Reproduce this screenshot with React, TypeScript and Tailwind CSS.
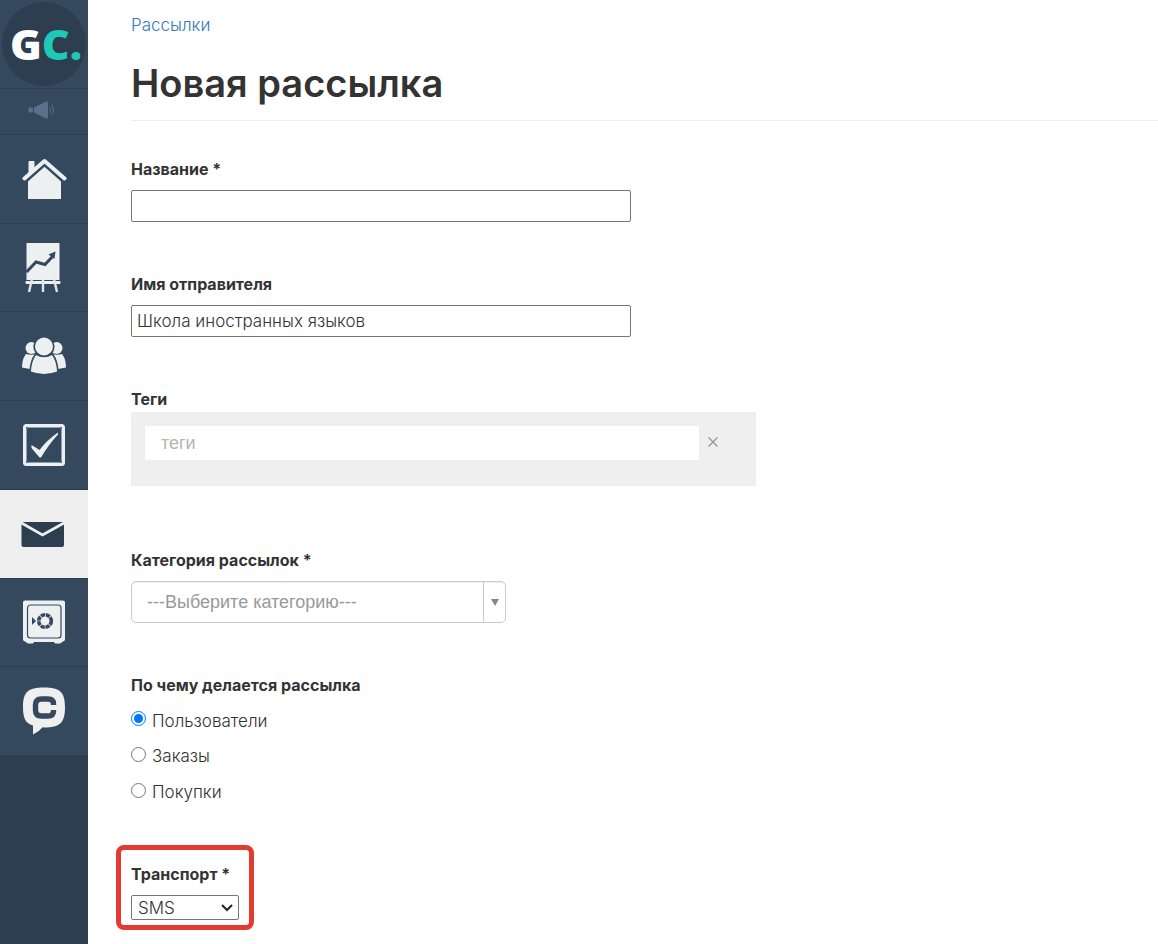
import { useState } from 'react'
import type { ReactNode } from 'react'
import clsx from 'clsx'

function MegaphoneIcon() {
  return (
    <svg viewBox="0 0 28 20" className="h-5 w-7" fill="#587089">
      <rect x="0.500" y="7.500" width="4.500" height="5" rx="1" />
      <path d="M6 7.500 L18 1.500 Q20 1 20 3 V17 Q20 19 18 18.500 L6 12.500 Z" />
      <path d="M21.500 7 Q23.500 10 21.500 13 M23.500 4.500 Q27.500 10 23.500 15.500" fill="none" stroke="#4d6680" strokeWidth="1.300" />
    </svg>
  )
}

function HomeIcon() {
  return (
    <svg viewBox="-1 0 46 42" className="h-[42px] w-[46px]">
      <path d="M6.500 15 V4 Q6.500 3 7.500 3 H11.500 Q12.500 3 12.500 4 V10 Z" fill="#ecf0f1" />
      <path d="M6 21 L22.500 6.500 L39 21 V41 H6 Z" fill="#ecf0f1" />
      <path d="M2.500 23 L22.500 5.200 L42.500 23" fill="none" stroke="#34495e" strokeWidth="5.200" />
      <path d="M2.500 20.500 L22.500 3 L42.500 20.500" fill="none" stroke="#ecf0f1" strokeWidth="4" strokeLinecap="round" strokeLinejoin="round" />
    </svg>
  )
}

function ChartIcon() {
  return (
    <svg viewBox="1 0 36 50" className="h-[50px] w-9 overflow-visible">
      <rect x="1.500" y="0" width="33" height="37" fill="#ecf0f1" />
      <path d="M1.500 29 L11 19 L20 21.500 L28 13" fill="none" stroke="#34495e" strokeWidth="3" />
      <path d="M23.500 11.500 L30.500 8.500 L29.500 16 Z" fill="#34495e" />
      <rect x="0.500" y="38" width="35" height="3" rx="1" fill="#ecf0f1" />
      <path d="M7 36 L4 49 M18 36 V49 M29 36 L32 49" stroke="#dfe5e8" strokeWidth="2.400" />
    </svg>
  )
}

function UsersIcon() {
  return (
    <svg viewBox="0 0 44 38" className="h-[38px] w-11" fill="#ecf0f1">
      <circle cx="9.500" cy="11" r="6" />
      <circle cx="34.500" cy="11" r="6" />
      <path d="M4 17 Q7 18 13 17.500 Q9 22 8 32 L0 30.500 Q0 22 4 17 Z" />
      <path d="M40 17 Q37 18 31 17.500 Q35 22 36 32 L44 30.500 Q44 22 40 17 Z" />
      <path d="M14 17 Q22 22 30 17 Q35 22 36 35 Q22 40.500 8 35 Q9 22 14 17 Z" stroke="#34495e" strokeWidth="1.600" />
      <circle cx="22" cy="9.500" r="9.800" stroke="#34495e" strokeWidth="1.600" />
    </svg>
  )
}

function TaskIcon() {
  return (
    <svg viewBox="0 0 42 42" className="h-[42px] w-[42px]">
      <rect x="1.500" y="1.500" width="39" height="39" rx="2" fill="none" stroke="#ecf0f1" strokeWidth="3" />
      <rect x="3.500" y="3.500" width="35" height="35" rx="2" fill="none" stroke="#8e9db0" strokeWidth="1" />
      <path d="M8.500 21 L16.500 26 Q24 16 35 8.500 V10.500 Q26 20 18 33.500 H16.500 L8.500 24 Z" fill="#ecf0f1" />
    </svg>
  )
}

function MailIcon() {
  return (
    <svg viewBox="1 0 44 28" className="h-7 w-11 overflow-visible">
      <rect x="0.500" y="2" width="42.500" height="25" rx="2" fill="#2c3e50" />
      <path d="M0.500 3 L21.500 15 L43 3" fill="none" stroke="#efefef" strokeWidth="2.600" />
    </svg>
  )
}

function SafeIcon() {
  return (
    <svg viewBox="0 0 42 44" className="h-11 w-[42px]">
      <path d="M2 0.500 H40 Q42 0.500 42 2.500 V39 Q42 41 40 41.500 L37 43.500 H32 L31 42 H11 L10 43.500 H5 L2 41.500 Q0 41 0 39 V2.500 Q0 0.500 2 0.500 Z" fill="#ecf0f1" />
      <rect x="4.500" y="5" width="33.500" height="33" rx="3" fill="none" stroke="#34495e" strokeWidth="1.200" />
      <path d="M9 17 L13 21 L9 25 Z" fill="#34495e" />
      <circle cx="22" cy="21" r="6.300" fill="none" stroke="#34495e" strokeWidth="3.600" strokeDasharray="4.200 0.748" />
    </svg>
  )
}

function ChatIcon() {
  return (
    <svg viewBox="0 0 42 48" className="h-12 w-[42px]">
      <path d="M21 0.500 C37 0.500 42 5 42 20 C42 36 37 40.500 21 40.500 L19.500 40.300 Q16 45 10 47.500 V38.500 C2.500 36.500 0 31 0 20 C0 5 5 0.500 21 0.500 Z" fill="#efefef" />
      <path d="M30.500 18 V17 Q30.500 12 25 12 H18.500 Q12.500 12 12.500 18 V23 Q12.500 29 18.500 29 H25 Q30.500 29 30.500 24 V23" fill="none" stroke="#34495e" strokeWidth="5.400" />
    </svg>
  )
}

const navItems = [
  { label: 'Главная', icon: <HomeIcon /> },
  { label: 'Статистика', icon: <ChartIcon /> },
  { label: 'Пользователи', icon: <UsersIcon /> },
  { label: 'Задачи', icon: <TaskIcon /> },
  { label: 'Сообщения', icon: <MailIcon />, active: true },
  { label: 'Продажи', icon: <SafeIcon /> },
  { label: 'Чат', icon: <ChatIcon /> },
]

function Sidebar() {
  return (
    <aside className="w-[88px] shrink-0 bg-[#2c3e50]">
      <a href="#" className="flex h-[89px] items-center justify-center border-b border-[#2c3e50] bg-[#34495e]">
        <span className="flex h-[84px] w-[84px] items-center justify-center rounded-full bg-[#2c3e50] pl-1 font-['Open_Sans',sans-serif] text-[43px] font-extrabold text-white">
          G<span className="text-[#1fc8b7]">C.</span>
        </span>
      </a>
      <a href="#" aria-label="Новости" className="flex h-[46px] items-center justify-center border-b border-[#2c3e50] bg-[#34495e] pr-1 pb-1">
        <MegaphoneIcon />
      </a>
      <nav className="grid h-[621px] grid-rows-7">
        {navItems.map((item) => (
          <a
            key={item.label}
            href="#"
            aria-label={item.label}
            className={clsx(
              'flex items-center justify-center border-b border-[#2c3e50]',
              item.active ? 'bg-[#efefef]' : 'bg-[#34495e]',
            )}
          >
            {item.icon}
          </a>
        ))}
      </nav>
    </aside>
  )
}

function Label({ htmlFor, children }: { htmlFor: string; children: ReactNode }) {
  return (
    <label htmlFor={htmlFor} className="block text-[16px] leading-6 font-bold">
      {children}
    </label>
  )
}

const sources = ['Пользователи', 'Заказы', 'Покупки']

export default function App() {
  const [sender, setSender] = useState('Школа иностранных языков')
  const [source, setSource] = useState('Пользователи')

  return (
    <div className="flex min-h-screen bg-white font-['Inter',sans-serif] text-[17px] leading-6 font-light text-[#333]">
      <Sidebar />

      <main className="min-w-0 flex-1 pt-[13px] pl-[43px]">
        <a href="#" className="text-[#337ab7]">
          Рассылки
        </a>
        <h1 className="mt-6 border-b border-[#eee] pb-[14px] text-[38px] leading-[45px] font-semibold">Новая рассылка</h1>

        <form className="flex flex-col items-start gap-[50px] pt-9">
          <div className="flex w-full max-w-[500px] flex-col gap-[9px]">
            <Label htmlFor="title">Название *</Label>
            <input id="title" type="text" className="h-8 w-full rounded-xs border border-[#767676] px-[5px]" />
          </div>

          <div className="flex w-full max-w-[500px] flex-col gap-[9px]">
            <Label htmlFor="sender">Имя отправителя</Label>
            <input
              id="sender"
              type="text"
              value={sender}
              onChange={(e) => setSender(e.target.value)}
              className="h-8 w-full rounded-xs border border-[#767676] px-[5px]"
            />
          </div>

          <div className="mb-3 flex w-full max-w-[625px] flex-col gap-px">
            <Label htmlFor="tags">Теги</Label>
            <div className="flex h-[74px] items-start gap-2 bg-[#efefef] p-[14px]">
              <input
                id="tags"
                type="text"
                placeholder="теги"
                className="h-[34px] min-w-0 flex-1 bg-white px-4 font-['Liberation_Sans',sans-serif] text-[18px] font-normal placeholder:text-[#b5b5b5]"
              />
              <button type="button" aria-label="Очистить" className="mr-[23px] flex h-8 w-3 items-center justify-center">
                <svg viewBox="0 0 10 10" className="h-[10px] w-[10px]" stroke="#999" strokeWidth="1.400">
                  <path d="M0.500 0.500 L9.500 9.500 M9.500 0.500 L0.500 9.500" />
                </svg>
              </button>
            </div>
          </div>

          <div className="flex w-full max-w-[375px] flex-col gap-[9px]">
            <Label htmlFor="category">Категория рассылок *</Label>
            <div className="relative">
              <select
                id="category"
                className="h-[42px] w-full appearance-none rounded-[5px] border border-[#ccc] bg-white px-[15px] font-['Liberation_Sans',sans-serif] text-[18px] font-normal text-[#999] shadow-[inset_0_1px_1px_rgba(0,0,0,0.075)]"
              >
                <option>---Выберите категорию---</option>
              </select>
              <span className="pointer-events-none absolute inset-y-px right-px flex w-[22px] items-center justify-center border-l border-[#ccc]">
                <svg viewBox="0 0 8 7" className="h-[7px] w-2" fill="#888">
                  <path d="M0 0 H8 L4 7 Z" />
                </svg>
              </span>
            </div>
          </div>

          <fieldset className="mb-0.5">
            <legend className="text-[16px] leading-6 font-bold">По чему делается рассылка</legend>
            <div className="grid h-[113px] grid-rows-3 pt-[6px]">
              {sources.map((name) => (
                <label key={name} className="flex items-center gap-[6px]">
                  <input
                    type="radio"
                    name="source"
                    checked={source === name}
                    onChange={() => setSource(name)}
                    className="mb-1 h-[15px] w-[15px]"
                  />
                  {name}
                </label>
              ))}
            </div>
          </fieldset>

          <div className="relative flex w-[108px] flex-col gap-[9px]">
            <Label htmlFor="transport">Транспорт *</Label>
            <div className="relative">
              <select
                id="transport"
                className="block h-[25px] w-full appearance-none rounded-xs border border-[#767676] bg-white px-[6px]"
              >
                <option>SMS</option>
                <option>Email</option>
              </select>
              <svg
                viewBox="0 0 12 8"
                className="pointer-events-none absolute inset-y-0 right-[6px] my-auto h-2 w-3"
                fill="none"
                stroke="#222"
                strokeWidth="2"
              >
                <path d="M1 1 L6 6 L11 1" />
              </svg>
            </div>
            <span className="pointer-events-none absolute -inset-x-[15px] -top-[17px] -bottom-[10px] rounded-lg border-5 border-[#e33b32]" />
          </div>
        </form>
      </main>
    </div>
  )
}
